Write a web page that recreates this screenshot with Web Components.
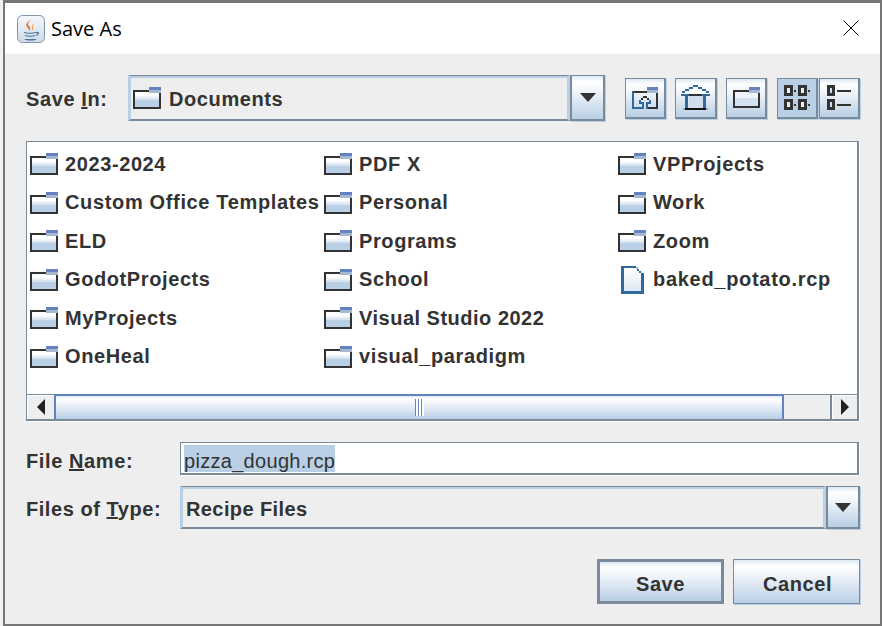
<!DOCTYPE html>
<html>
<head>
<meta charset="utf-8">
<title>Save As</title>
<style>
  html, body { margin: 0; padding: 0; width: 882px; height: 626px; overflow: hidden; background: #f1f1f1; }
</style>
</head>
<body>
<save-dialog>
  <dialog-row slot="top" label-width="102" label-drop="2">
    <span slot="label">Save <u>I</u>n:</span>
    <combo-box style="width:477px;height:46px;--arrow-w:31px" icon>Documents</combo-box>
    <tool-bar>
      <tool-button style="margin-right:9px"><svg width="26" height="22" viewBox="0 0 26 22" shape-rendering="crispEdges">
        <rect x="15" y="0" width="11" height="3" fill="#6382bf"/><rect x="15" y="3" width="11" height="3" fill="#a5b8cf"/>
        <g fill="#33689f"><rect x="0" y="4" width="2" height="18"/><rect x="0" y="20" width="10" height="2"/><rect x="7" y="13" width="2" height="2"/><rect x="17" y="13" width="2" height="2"/><rect x="7" y="15" width="3" height="2"/><rect x="16" y="15" width="3" height="2"/><rect x="10" y="15" width="2" height="7"/><rect x="14" y="15" width="2" height="7"/></g>
        <g fill="#333"><rect x="2" y="4" width="13" height="2"/><rect x="24" y="6" width="2" height="16"/><rect x="16" y="20" width="8" height="2"/><rect x="11" y="9" width="4" height="2"/><rect x="9" y="11" width="2" height="2"/><rect x="15" y="11" width="2" height="2"/></g>
      </svg></tool-button>
      <tool-button style="margin-right:9px;width:42px"><svg width="29" height="25" viewBox="0 0 29 25" shape-rendering="crispEdges">
        <path d="M13 1h3v2h4v2h4v2h4v2H1V7h4V5h4V3h4z" fill="#fff"/>
        <rect x="8" y="11" width="14" height="12" fill="#cfdeee"/>
        <g fill="#33689f"><rect x="12" y="0" width="5" height="2"/><rect x="8" y="2" width="4" height="2"/><rect x="17" y="2" width="4" height="2"/><rect x="4" y="4" width="4" height="2"/><rect x="21" y="4" width="4" height="2"/><rect x="1" y="6" width="3" height="2"/><rect x="25" y="6" width="3" height="2"/><rect x="0" y="9" width="8" height="2"/><rect x="21" y="9" width="8" height="2"/><rect x="4" y="11" width="3" height="12"/><rect x="22" y="11" width="3" height="12"/></g>
        <rect x="8" y="9" width="13" height="2" fill="#333"/>
        <rect x="4" y="23" width="21" height="2" fill="#111"/><rect x="2" y="23" width="2" height="2" fill="#8fa6bf"/><rect x="25" y="23" width="2" height="2" fill="#8fa6bf"/>
      </svg></tool-button>
      <tool-button style="margin-right:10px"><svg width="27" height="21" viewBox="0 0 27 21" shape-rendering="crispEdges"><rect x="2" y="5" width="23" height="14" fill="#f1f5f9"/><rect x="2" y="11" width="23" height="8" fill="#d4e1ee"/><rect x="16" y="0" width="11" height="3" fill="#6382bf"/><rect x="16" y="3" width="11" height="3" fill="#a5b8cf"/><path d="M0 3h16v2H2v14h23V6h2v15H0z" fill="#333"/></svg></tool-button>
      <tool-button pressed style="margin-right:1px"><svg width="27" height="25" viewBox="0 0 27 25" shape-rendering="crispEdges"><path d="M0 0h9v11H0zM3 3v5h3V3z" fill="#333"/><rect x="3" y="3" width="3" height="5" fill="#e6eef6"/><rect x="10" y="5" width="2" height="2" fill="#333"/><path d="M14 0h9v11h-9zM17 3v5h3V3z" fill="#333"/><rect x="17" y="3" width="3" height="5" fill="#e6eef6"/><rect x="24" y="5" width="2" height="2" fill="#333"/><path d="M0 14h9v11H0zM3 17v5h3v-5z" fill="#333"/><rect x="3" y="17" width="3" height="5" fill="#e6eef6"/><rect x="10" y="19" width="2" height="2" fill="#333"/><path d="M14 14h9v11h-9zM17 17v5h3v-5z" fill="#333"/><rect x="17" y="17" width="3" height="5" fill="#e6eef6"/><rect x="24" y="19" width="2" height="2" fill="#333"/></svg></tool-button>
      <tool-button><svg width="24" height="25" viewBox="0 0 24 25" shape-rendering="crispEdges"><path d="M0 0h8v11H0zM3 3v5h2V3z" fill="#333"/><rect x="3" y="3" width="2" height="5" fill="#cfe0f2"/><rect x="10" y="5" width="14" height="2" fill="#333"/><path d="M0 14h8v11H0zM3 17v5h2v-5z" fill="#333"/><rect x="3" y="17" width="2" height="5" fill="#cfe0f2"/><rect x="10" y="19" width="14" height="2" fill="#333"/></svg></tool-button>
    </tool-bar>
  </dialog-row>

  <file-list slot="list">
    <file-item>2023-2024</file-item>
    <file-item style="letter-spacing:.65px">Custom Office Templates</file-item>
    <file-item>ELD</file-item>
    <file-item>GodotProjects</file-item>
    <file-item>MyProjects</file-item>
    <file-item>OneHeal</file-item>
    <file-item>PDF X</file-item>
    <file-item>Personal</file-item>
    <file-item>Programs</file-item>
    <file-item>School</file-item>
    <file-item style="letter-spacing:.5px">Visual Studio 2022</file-item>
    <file-item>visual_paradigm</file-item>
    <file-item>VPProjects</file-item>
    <file-item>Work</file-item>
    <file-item>Zoom</file-item>
    <file-item type="file" style="letter-spacing:.7px">baked_potato.rcp</file-item>
  </file-list>

  <dialog-row slot="name" label-width="154" label-drop="6">
    <span slot="label">File <u>N</u>ame:</span>
    <text-field style="width:679px;height:33px">pizza_dough.rcp</text-field>
  </dialog-row>

  <dialog-row slot="type" label-width="154" label-drop="4">
    <span slot="label" style="letter-spacing:.55px">Files of <u>T</u>ype:</span>
    <combo-box style="width:680px;height:43px;--arrow-w:30px;letter-spacing:.4px">Recipe Files</combo-box>
  </dialog-row>

  <action-button slot="actions" default>Save</action-button>
  <action-button slot="actions" style="padding-left:2px">Cancel</action-button>
</save-dialog>

<script>
// Todos los elementos usan el mismo patron: estilos + markup en un shadow root abierto
class BaseElement extends HTMLElement {
    constructor(html) {
        super();
        this.attachShadow({ mode: 'open' }).innerHTML = html;
    }
}

const OCEAN = 'linear-gradient(#dde8f3 0, #ffffff 14%, #eef3f9 38%, #b8cfe5 100%)';

class SaveDialog extends BaseElement {
    constructor() {
        super(`
            <style>
                :host {
                    display: flex;
                    flex-direction: column;
                    box-sizing: border-box;
                    width: 879px;
                    height: 626px;
                    margin-left: 3px;
                    border: solid #777;
                    border-width: 3px 2px 2px 2px;
                    background: #eeeeee;
                    color: #333;
                    font: bold 20px "Liberation Sans", Arial, sans-serif;
                    letter-spacing: .6px;
                }
                .title {
                    display: flex;
                    align-items: center;
                    height: 51px;
                    padding: 0 21px 0 12px;
                    background: #fff;
                    color: #000;
                    font: 20px "Open Sans", "Noto Sans", sans-serif;
                    letter-spacing: 0;
                }
                .title svg { margin-right: 6px; }
                .title span { flex: 1; }
                .title .close { margin: -2px 0 0 0; }
                .main {
                    flex: 1;
                    display: flex;
                    flex-direction: column;
                    padding: 21px 20px 0 21px;
                }
                .list { display: block; margin-top: 20px; }
                .name { display: block; margin-top: 21px; }
                .type { display: block; margin-top: 11px; }
                .actions {
                    display: flex;
                    justify-content: flex-end;
                    gap: 9px;
                    margin-top: 30px;
                }
            </style>
            <div class="title">
                <svg width="28" height="28" viewBox="0 0 28 28">
                    <defs><linearGradient id="j" x1="0" y1="0" x2="0" y2="1"><stop offset="0" stop-color="#f5f8fb"/><stop offset="1" stop-color="#cfdbe8"/></linearGradient></defs>
                    <rect x="0.5" y="0.5" width="27" height="27" rx="5" fill="url(#j)" stroke="#7d94ab"/>
                    <path d="M15 4c-4 3-5 5-3 7 1 1 2 3 0 5 0-2-1-3-2-4-2-3 1-6 5-8z" fill="#e0752a"/>
                    <path d="M18 8c-3 2-4 3-3 5 .5 1 .5 2-.5 3 2-1 2-2 1.500-3.500C15.500 11 16 9.500 18 8z" fill="#ee9a58"/>
                    <path d="M7 17c3 1 9 1 12 0v1c-3 1-9 1-12 0zM8 20c3 1 8 1 10 0v1c-2 1-7 1-10 0zM7 24h13c-3 2-10 2-13 0zM19 17c4-1 4 3 0 4v-1c2-.5 2-2.500 0-2z" fill="#4a7396"/>
                </svg>
                <span>Save As</span>
                <svg class="close" width="16" height="16" viewBox="0 0 16 16"><path d="M.5.5l15 15M15.500.5l-15 15" stroke="#000" stroke-width="1" fill="none"/></svg>
            </div>
            <div class="main">
                <slot name="top"></slot>
                <div class="list"><slot name="list"></slot></div>
                <div class="name"><slot name="name"></slot></div>
                <div class="type"><slot name="type"></slot></div>
                <div class="actions"><slot name="actions"></slot></div>
            </div>
        `);
    }
}

class DialogRow extends BaseElement {
    constructor() {
        super(`
            <style>
                :host { display: flex; align-items: center; }
                .label { flex: none; box-sizing: border-box; }
            </style>
            <div class="label"><slot name="label"></slot></div>
            <slot></slot>
        `);
    }
    connectedCallback() {
        const label = this.shadowRoot.querySelector('.label');
        label.style.width = this.getAttribute('label-width') + 'px';
        label.style.paddingTop = this.getAttribute('label-drop') + 'px';
    }
}

class FolderGlyph extends BaseElement {
    constructor() {
        super(`
            <style>:host { display: inline-flex; flex: none; } svg { display: block; }</style>
            <svg width="28" height="22" viewBox="0 0 28 22" shape-rendering="crispEdges">
                <rect x="2" y="5" width="24" height="15" fill="#fff"/>
                <rect x="2" y="9" width="24" height="2" fill="#eef3f9"/>
                <rect x="2" y="11" width="24" height="2" fill="#d8e4f0"/>
                <rect x="2" y="13" width="24" height="7" fill="#b8cfe5"/>
                <rect x="16" y="0" width="12" height="3" fill="#6382bf"/>
                <rect x="16" y="3" width="12" height="3" fill="#a5b8cf"/>
                <path d="M0 3h16v2H2v15h24V6h2v16H0z" fill="#333"/>
            </svg>
        `);
    }
}

class ComboBox extends BaseElement {
    constructor() {
        super(`
            <style>
                :host { display: flex; flex: none; box-sizing: border-box; }
                .field {
                    flex: 1;
                    display: flex;
                    align-items: center;
                    gap: 8px;
                    padding-left: 2px;
                    border: 3px solid #b8cfe5;
                    border-top: 1px solid #7a8a99;
                    border-bottom: 2px solid #7a8a99;
                    box-shadow: inset 0 2px 0 #b8cfe5;
                }
                .text { padding-top: 4px; }
                .arrow {
                    flex: none;
                    width: var(--arrow-w, 31px);
                    display: flex;
                    align-items: center;
                    justify-content: center;
                    border: 1px solid #7a8a99;
                    border-width: 1px 2px 2px 2px;
                    box-shadow: 1px 1px 0 #b8cfe5;
                    background: ${OCEAN};
                }
                .arrow i {
                    width: 0; height: 0;
                    border: 8.5px solid transparent;
                    border-top: 9px solid #333;
                    border-bottom: 0;
                }
            </style>
            <div class="field"><span class="text"><slot></slot></span></div>
            <div class="arrow"><i></i></div>
        `);
    }
    connectedCallback() {
        if (this.hasAttribute('icon')) {
            this.shadowRoot.querySelector('.field').prepend(document.createElement('folder-glyph'));
        } else {
            this.shadowRoot.querySelector('.field').style.paddingLeft = '3px';
        }
    }
}

class ToolBar extends BaseElement {
    constructor() {
        super(`
            <style>:host { display: flex; margin-left: 20px; align-items: center; }</style>
            <slot></slot>
        `);
    }
}

class ToolButton extends BaseElement {
    constructor() {
        super(`
            <style>
                :host {
                    display: flex;
                    flex: none;
                    align-items: center;
                    justify-content: center;
                    box-sizing: border-box;
                    width: 41px;
                    height: 41px;
                    border: solid #7a8a99;
                    border-width: 1px 2px 2px 1px;
                    box-shadow: 1px 1px 0 #b8cfe5;
                    background: ${OCEAN};
                }
                :host([pressed]) { background: #b8cfe5; }
            </style>
            <slot></slot>
        `);
    }
}

class FileList extends BaseElement {
    constructor() {
        super(`
            <style>
                :host {
                    display: flex;
                    flex-direction: column;
                    box-sizing: border-box;
                    width: 833px;
                    height: 280px;
                    border: solid #7a8a99;
                    border-width: 1px 2px 1px 1px;
                    background: #fff;
                    box-shadow: 1px 1px 0 #fff;
                }
                .grid {
                    flex: 1;
                    display: grid;
                    grid-auto-flow: column;
                    grid-template-rows: repeat(6, 38.5px);
                    grid-auto-columns: 294px;
                    padding: 2.9px 0 0 3px;
                    overflow: hidden;
                }
            </style>
            <div class="grid"><slot></slot></div>
            <h-scroll></h-scroll>
        `);
    }
}

class FileItem extends BaseElement {
    constructor() {
        super(`
            <style>
                :host { display: flex; align-items: center; gap: 7px; white-space: nowrap; }
                .icon { display: flex; width: 28px; justify-content: center; flex: none; }
            </style>
            <div class="icon"><folder-glyph></folder-glyph></div>
            <slot></slot>
        `);
    }
    connectedCallback() {
        if (this.getAttribute('type') === 'file') {
            this.shadowRoot.querySelector('.icon').innerHTML = `
                <svg width="23" height="28" viewBox="0 0 23 28" shape-rendering="crispEdges">
                    <defs><linearGradient id="f" x1="0" y1="0" x2="0" y2="1"><stop offset="0" stop-color="#fff"/><stop offset="1" stop-color="#dbe7f3"/></linearGradient></defs>
                    <path d="M2 2h13v3h3v3h3v18H2z" fill="url(#f)"/>
                    <path d="M0 0h15v2H3v23h17V9h3v19H0z" fill="#33689f"/>
                    <path d="M16 3h2v2h2v2h3v2h-3V7h-2V5h-2z" fill="#33689f"/>
                    <rect x="15" y="1" width="2" height="2" fill="#a5b8cf"/>
                </svg>`;
        }
    }
}

class HScroll extends BaseElement {
    constructor() {
        super(`
            <style>
                :host {
                    display: flex;
                    flex: none;
                    height: 26px;
                    background: #eeeeee;
                    box-sizing: border-box;
                    border-top: 1px solid #7a8a99;
                    border-bottom: 1px solid #7a8a99;
                }
                .btn {
                    flex: none;
                    width: 27px;
                    display: flex;
                    align-items: center;
                    justify-content: center;
                    background: #eeeeee;
                    box-shadow: inset 1px 1px 0 #fff;
                }
                .btn.r { border-left: 2px solid #7a8a99; box-sizing: border-box; }
                .btn i { width: 0; height: 0; border: 8px solid transparent; }
                .l i { border-left: 0; border-right: 8px solid #222; }
                .r i { border-right: 0; border-left: 8px solid #222; }
                .thumb {
                    flex: none;
                    box-sizing: border-box;
                    width: 730px;
                    margin-top: -1px;
                    display: flex;
                    align-items: center;
                    justify-content: center;
                    border: solid #6382bf;
                    border-width: 2px 2px 0 2px;
                    background: linear-gradient(#dde8f3 0, #fff 12%, #eef3f9 35%, #b8cfe5 100%);
                }
                .grip { width: 9px; height: 17px; display: flex; justify-content: center; background: #fff; }
                .grip b { width: 1px; background: #6382bf; margin: 0 1px 0 0; }
                .grip b + b { margin-left: 1px; }
                .track { flex: 1; }
            </style>
            <div class="btn l"><i></i></div>
            <div class="thumb"><div class="grip"><b></b><b></b><b></b></div></div>
            <div class="track"></div>
            <div class="btn r"><i></i></div>
        `);
    }
}

class TextField extends BaseElement {
    constructor() {
        super(`
            <style>
                :host {
                    display: flex;
                    flex: none;
                    box-sizing: border-box;
                    padding: 2px 0 0 3px;
                    background: #fff;
                    border: solid #7a8a99;
                    border-width: 1px 2px 2px 1px;
                    box-shadow: 1px 1px 0 #fff;
                    font: 20px "Liberation Sans", Arial, sans-serif;
                    letter-spacing: .3px;
                }
                span { background: #b8cfe5; line-height: 32px; height: 27px; }
            </style>
            <span><slot></slot></span>
        `);
    }
}

class ActionButton extends BaseElement {
    constructor() {
        super(`
            <style>
                :host {
                    display: flex;
                    align-items: center;
                    justify-content: center;
                    box-sizing: border-box;
                    width: 127px;
                    height: 45px;
                    padding-top: 5px;
                    border: 1px solid #7a8a99;
                    box-shadow: 1px 1px 0 #b8cfe5;
                    background: ${OCEAN};
                }
                :host([default]) { border-width: 3px; box-shadow: none; }
            </style>
            <slot></slot>
        `);
    }
}

// Definir los Custom Elements
customElements.define('folder-glyph', FolderGlyph);
customElements.define('combo-box', ComboBox);
customElements.define('tool-bar', ToolBar);
customElements.define('tool-button', ToolButton);
customElements.define('h-scroll', HScroll);
customElements.define('file-item', FileItem);
customElements.define('file-list', FileList);
customElements.define('text-field', TextField);
customElements.define('action-button', ActionButton);
customElements.define('dialog-row', DialogRow);
customElements.define('save-dialog', SaveDialog);
</script>
</body>
</html>
